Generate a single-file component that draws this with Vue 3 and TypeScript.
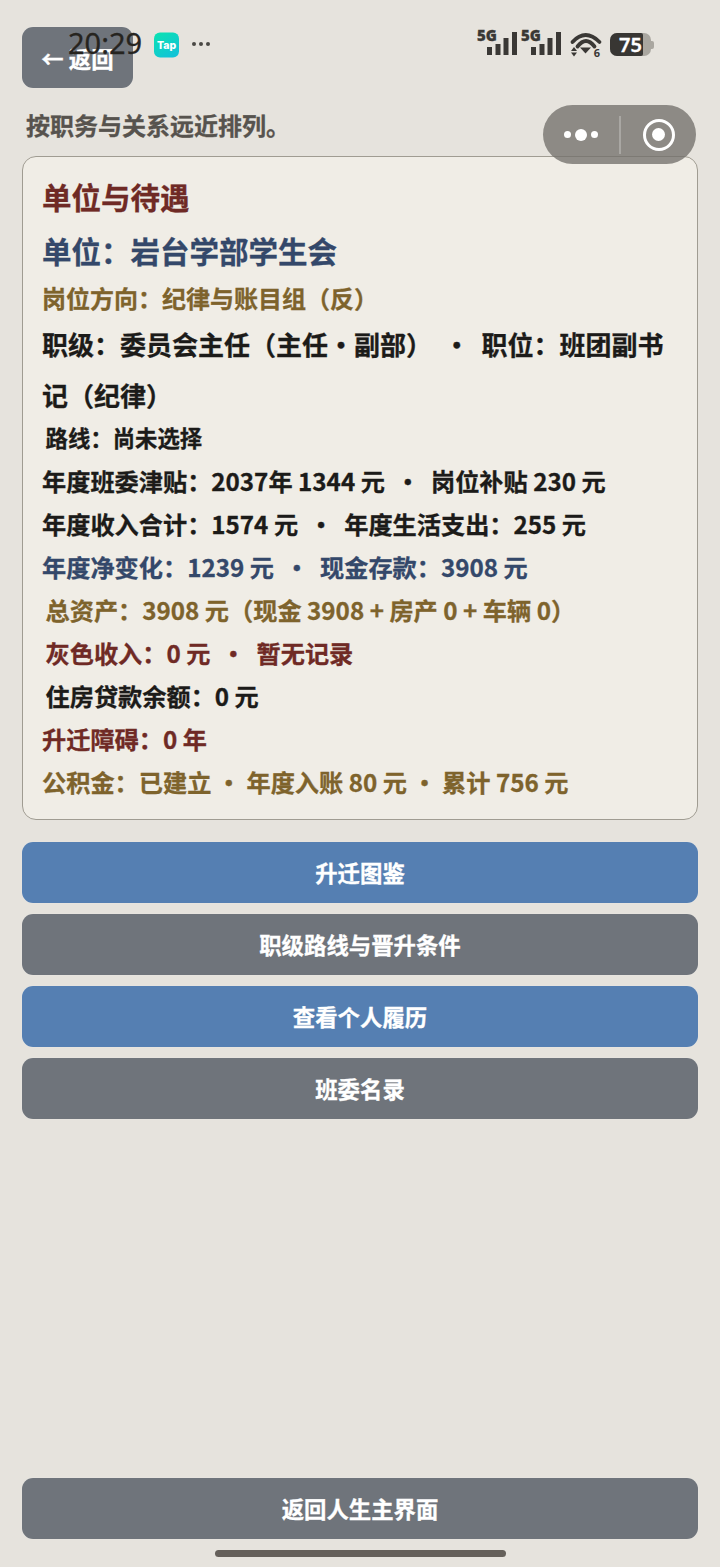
<script setup lang="ts">
interface Line { text: string; cls: string }
const lines: Line[] = [
  { text: '路线：尚未选择', cls: 'small ink inset' },
  { text: '年度班委津贴：2037年 1344 元  •  岗位补贴 230 元', cls: 'ink' },
  { text: '年度收入合计：1574 元  •  年度生活支出：255 元', cls: 'ink' },
  { text: '年度净变化：1239 元  •  现金存款：3908 元', cls: 'navy' },
  { text: '总资产：3908 元（现金 3908 + 房产 0 + 车辆 0）', cls: 'gold inset' },
  { text: '灰色收入：0 元  •  暂无记录', cls: 'red inset' },
  { text: '住房贷款余额：0 元', cls: 'ink inset' },
  { text: '升迁障碍：0 年', cls: 'red' },
  { text: '公积金：已建立 • 年度入账 80 元 • 累计 756 元', cls: 'gold' },
]
const actions = [
  { text: '升迁图鉴', cls: 'blue' },
  { text: '职级路线与晋升条件', cls: 'grey' },
  { text: '查看个人履历', cls: 'blue' },
  { text: '班委名录', cls: 'grey' },
]
</script>

<template>
  <div class="page">
    <button class="btn back">← 返回</button>
    <p class="sub">按职务与关系远近排列。</p>

    <section class="card">
      <h2 class="title">单位与待遇</h2>
      <div class="unit">单位：岩台学部学生会</div>
      <div class="line gold dir">岗位方向：纪律与账目组（反）</div>
      <div class="rank">职级：委员会主任（主任•副部） &nbsp;•&nbsp; 职位：班团副书记（纪律）</div>
      <div v-for="l in lines" :key="l.text" class="line" :class="l.cls">{{ l.text }}</div>
    </section>

    <div class="actions">
      <button v-for="a in actions" :key="a.text" class="btn wide" :class="a.cls">{{ a.text }}</button>
    </div>

    <div class="spacer"></div>
    <button class="btn wide grey">返回人生主界面</button>
    <div class="home"></div>

    <div class="status">
      <span class="time">20:29</span>
      <svg class="tap" width="26" height="26" viewBox="0 0 26 26">
        <defs>
          <linearGradient id="tapg" x1="0" y1="0" x2="0.6" y2="1">
            <stop offset="0" stop-color="#0be3b0" />
            <stop offset="1" stop-color="#12c4d6" />
          </linearGradient>
        </defs>
        <rect width="25" height="25" y="0.5" rx="6" fill="url(#tapg)" />
        <text x="12.500" y="16.500" text-anchor="middle" class="taptext">Tap</text>
      </svg>
      <span class="dots"><i></i><i></i><i></i></span>
      <div class="sys">
        <span class="sig"><b>5G</b><svg width="30" height="23" viewBox="0 0 30 23"><rect x="0" y="15" width="5" height="8" /><rect x="8.500" y="12" width="5" height="11" /><rect x="16.500" y="6" width="5" height="17" /><rect x="25" y="0" width="5" height="23" /></svg></span>
        <span class="sig"><b>5G</b><svg width="30" height="23" viewBox="0 0 30 23"><rect x="0" y="15" width="5" height="8" /><rect x="8.500" y="12" width="5" height="11" /><rect x="16.500" y="6" width="5" height="17" /><rect x="25" y="0" width="5" height="23" /></svg></span>
        <svg class="wifi" width="34" height="30" viewBox="0 0 34 30">
          <path d="M3.500 9 Q16.500 -5 30.500 9" fill="none" stroke="#3a3835" stroke-width="3.800" stroke-linecap="round" />
          <path d="M8.500 13.500 Q17 2.500 25.500 13.500" fill="none" stroke="#3a3835" stroke-width="3.800" stroke-linecap="round" />
          <path d="M11 14.500 L22 14.500 L16.500 20.500 Z" fill="#3a3835" />
          <path d="M2 18 L5 14 L8 18 Z M2 19.500 L8 19.500 L5 23.500 Z" fill="#3a3835" />
          <text x="28" y="23.500" text-anchor="middle" class="six">6</text>
        </svg>
        <span class="batt"><span class="battfill">75</span><i class="battend"></i></span>
      </div>
    </div>

    <div class="capsule">
      <span class="cdots"><i></i><i class="big"></i><i></i></span>
      <span class="csep"></span>
      <span class="ctarget"><i></i></span>
    </div>
  </div>
</template>

<style>
html, body { margin: 0; background: #e6e3dd; }
</style>

<style scoped>
.page {
  position: relative;
  width: 720px;
  height: 1567px;
  box-sizing: border-box;
  padding: 27px 22px 0;
  display: flex;
  flex-direction: column;
  background: #e6e3dd;
  font-family: "Noto Sans CJK SC", "Noto Sans", sans-serif;
  font-weight: 700;
  -webkit-text-stroke: 0.3px currentColor;
  overflow: hidden;
}
.btn {
  display: block;
  border: 0;
  padding: 0 0 2px;
  font: inherit;
  color: #fff;
  font-size: 22.400px;
  border-radius: 11px;
  box-shadow: 0 0 1px rgba(255, 255, 255, 0.6);
}
.back {
  width: 111px;
  height: 61px;
  background: #6f747b;
  padding: 1px 0 0;
}
.wide { width: 100%; height: 61px; flex: none; }
.blue { background: #557fb2; }
.grey { background: #6f747b; }
.sub {
  margin: 19px 0 0 4px;
  height: 36px;
  line-height: 36px;
  font-size: 24px;
  color: #57534e;
}
.card {
  box-sizing: border-box;
  height: 664px;
  margin-top: 13px;
  padding: 14px 19px 0;
  background: #f0ede6;
  border: 1.500px solid #a09c92;
  border-radius: 14px;
}
.title {
  margin: 0;
  height: 49px;
  line-height: 50px;
  font-size: 29.500px;
  font-weight: 700;
  color: #6f2a25;
}
.unit {
  height: 60px;
  line-height: 60px;
  font-size: 29.500px;
  color: #34486a;
}
.line {
  height: 43px;
  line-height: 43px;
  font-size: 24.200px;
  white-space: pre;
}
.dir { height: 34px; line-height: 34px; margin-top: 1px; font-size: 24px; }
.rank {
  margin-top: 3px;
  margin-bottom: -4px;
  line-height: 51px;
  font-size: 26px;
  color: #1c1b19;
}
.inset { padding-left: 3.500px; }
.small { font-size: 22.400px; }
.ink { color: #1c1b19; }
.navy { color: #34486a; }
.gold { color: #7e632c; }
.red { color: #6f2a25; }
.actions {
  margin-top: 22px;
  display: flex;
  flex-direction: column;
  gap: 11px;
}
.spacer { flex: 1; }
.home {
  flex: none;
  align-self: center;
  width: 291px;
  height: 7px;
  margin-top: 11px;
  margin-bottom: 10px;
  border-radius: 4px;
  background: #65605a;
}
.status {
  position: absolute;
  top: 27px;
  left: 68px;
  width: 586px;
  height: 32px;
  display: flex;
  align-items: center;
}
.time {
  font-family: "Noto Sans", sans-serif;
  font-weight: 400;
  font-size: 29px;
  color: #26241f;
  line-height: 34px;
}
.tap { margin-left: 12px; margin-top: 3px; }
.taptext {
  font-family: "Inter", sans-serif;
  font-weight: 800;
  font-size: 10.500px;
  fill: #fff;
  stroke-width: 0;
  -webkit-text-stroke: 0;
}
.dots { display: flex; gap: 3px; margin-left: 12px; margin-top: 2px; }
.dots i { width: 4px; height: 4px; border-radius: 50%; background: #4a4844; }
.sys {
  position: absolute;
  right: 0;
  top: 2px;
  display: flex;
  align-items: flex-start;
  gap: 4px;
}
.sig { position: relative; display: block; width: 40px; height: 26px; }
.sig b {
  position: absolute;
  left: 0;
  top: -1px;
  font-family: "Noto Sans", sans-serif;
  font-size: 15px;
  line-height: 15px;
  color: #3a3835;
}
.sig svg { position: absolute; right: 0; bottom: 0; fill: #3a3835; }
.wifi { margin: 4px 0 0 4px; overflow: visible; }
.six {
  font-family: "Noto Sans", sans-serif;
  font-size: 11px;
  font-weight: 700;
  fill: #3a3835;
  -webkit-text-stroke: 0;
}
.batt {
  display: flex;
  align-items: center;
  width: 41px;
  height: 23px;
  position: relative;
  border-radius: 7px;
  background: #aaa7a0;
  margin: 4px 3px 0 3px;
}
.battfill {
  width: 33px;
  height: 23px;
  line-height: 23px;
  border-radius: 7px 2px 2px 7px;
  background: #383633;
  color: #fff;
  font-family: "Noto Sans", sans-serif;
  font-size: 20px;
  font-weight: 600;
  text-align: right;
  padding-right: 1px;
  box-sizing: border-box;
}
.battend {
  position: absolute;
  right: -3px;
  top: 7.500px;
  width: 3px;
  height: 8px;
  border-radius: 0 2px 2px 0;
  background: #aaa7a0;
}
.capsule {
  position: absolute;
  left: 543px;
  top: 105px;
  width: 153px;
  height: 59px;
  border-radius: 30px;
  background: rgba(115, 113, 108, 0.78);
  display: flex;
  align-items: center;
}
.cdots {
  width: 76px;
  display: flex;
  align-items: center;
  justify-content: center;
  gap: 4px;
}
.cdots i { width: 7px; height: 7px; border-radius: 50%; background: #fff; }
.cdots i.big { width: 12px; height: 12px; }
.csep { width: 1.500px; height: 38px; background: rgba(255, 255, 255, 0.25); }
.ctarget {
  box-sizing: border-box;
  width: 32px;
  height: 32px;
  margin-left: 22px;
  border: 3px solid #fff;
  border-radius: 50%;
  display: flex;
  align-items: center;
  justify-content: center;
}
.ctarget i { width: 13px; height: 13px; border-radius: 50%; background: #fff; }
</style>
